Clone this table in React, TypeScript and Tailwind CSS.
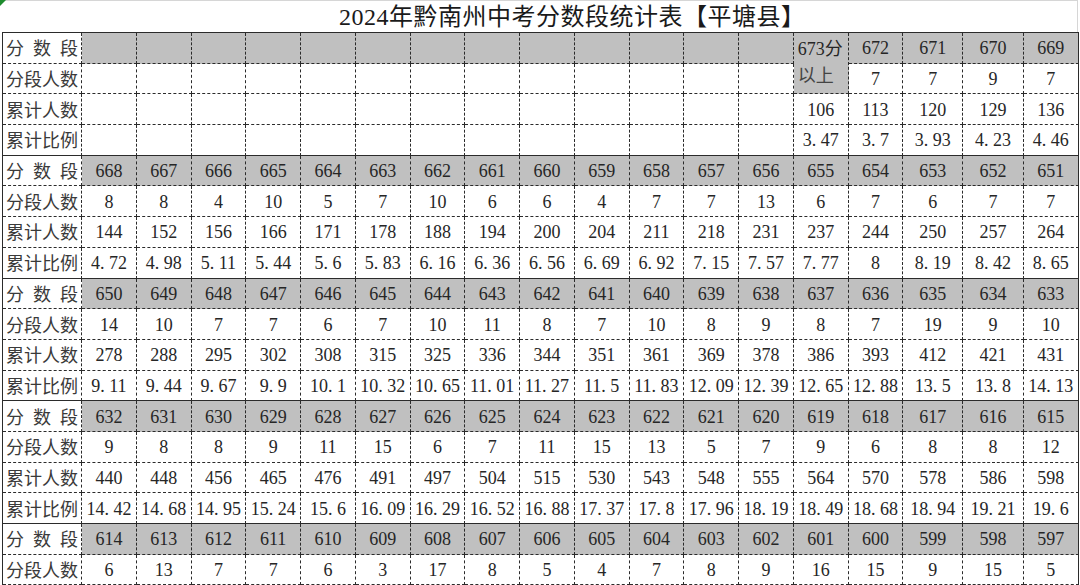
import React from 'react';

type Cell = string | null;

const LABELS = ['分数段', '分段人数', '累计人数', '累计比例'];

const span = (from: number, n: number) => Array.from({ length: n }, (_, i) => String(from - i));

const groups: Cell[][][] = [
  [
    [...Array(13).fill(''), '673分以上', '672', '671', '670', '669'],
    [...Array(13).fill(''), null, '7', '7', '9', '7'],
    [...Array(13).fill(''), '106', '113', '120', '129', '136'],
    [...Array(13).fill(''), '3.47', '3.7', '3.93', '4.23', '4.46'],
  ],
  [
    span(668, 18),
    '8 8 4 10 5 7 10 6 6 4 7 7 13 6 7 6 7 7'.split(' '),
    '144 152 156 166 171 178 188 194 200 204 211 218 231 237 244 250 257 264'.split(' '),
    '4.72 4.98 5.11 5.44 5.6 5.83 6.16 6.36 6.56 6.69 6.92 7.15 7.57 7.77 8 8.19 8.42 8.65'.split(' '),
  ],
  [
    span(650, 18),
    '14 10 7 7 6 7 10 11 8 7 10 8 9 8 7 19 9 10'.split(' '),
    '278 288 295 302 308 315 325 336 344 351 361 369 378 386 393 412 421 431'.split(' '),
    '9.11 9.44 9.67 9.9 10.1 10.32 10.65 11.01 11.27 11.5 11.83 12.09 12.39 12.65 12.88 13.5 13.8 14.13'.split(' '),
  ],
  [
    span(632, 18),
    '9 8 8 9 11 15 6 7 11 15 13 5 7 9 6 8 8 12'.split(' '),
    '440 448 456 465 476 491 497 504 515 530 543 548 555 564 570 578 586 598'.split(' '),
    '14.42 14.68 14.95 15.24 15.6 16.09 16.29 16.52 16.88 17.37 17.8 17.96 18.19 18.49 18.68 18.94 19.21 19.6'.split(' '),
  ],
  [
    span(614, 18),
    '6 13 7 7 6 3 17 8 5 4 7 8 9 16 15 9 15 5'.split(' '),
  ],
];

// SimSun-style period: dot sits in a half-width slot
function Num({ v }: { v: string }) {
  const [a, b] = v.split('.');
  if (b === undefined) return <>{a}</>;
  return (
    <>
      {a}
      <span className="inline-block w-[0.5em] text-left">.</span>
      {b}
    </>
  );
}

function Label({ text }: { text: string }) {
  return (
    <div className="flex w-full justify-between px-[3px] text-[18px] text-[#3a3a3a] font-['Noto_Sans_CJK_SC',sans-serif]">
      {text.split('').map((c, i) => (
        <span key={i}>{c}</span>
      ))}
    </div>
  );
}

export default function App() {
  const cells: React.ReactNode[] = [];

  groups.forEach((rows, g) => {
    rows.forEach((row, r) => {
      const groupEnd = r === 3;
      const bottom = groupEnd ? '[border-bottom-style:solid]' : '[border-bottom-style:dashed]';
      cells.push(
        <div
          key={`l-${g}-${r}`}
          className={`flex items-center border-r border-b border-[#2b2b2b] bg-white [border-right-style:dashed] ${bottom}`}
        >
          <Label text={LABELS[r]} />
        </div>
      );
      row.forEach((v, c) => {
        if (v === null) return;
        const right = c === 17 ? '[border-right-style:solid]' : '[border-right-style:dashed]';
        const fill = r === 0 ? 'bg-[#c0c0c0]' : 'bg-white';
        if (v === '673分以上') {
          cells.push(
            <div
              key={`c-${g}-${r}-${c}`}
              className={`row-span-2 flex flex-col justify-center border-r border-b border-[#2b2b2b] pl-[4px] leading-[27px] ${fill} ${right} [border-bottom-style:dashed]`}
            >
              <span>673分</span>
              <span className="text-[#444]">以上</span>
            </div>
          );
          return;
        }
        cells.push(
          <div
            key={`c-${g}-${r}-${c}`}
            className={`flex items-center justify-center whitespace-nowrap border-r border-b border-[#2b2b2b] pt-[2px] ${fill} ${right} ${bottom}`}
          >
            <Num v={v} />
          </div>
        );
      });
    });
  });

  return (
    <div className="relative h-[585px] w-[1080px] overflow-hidden bg-white text-[#262626] font-['Liberation_Serif','Noto_Sans_CJK_SC',serif]">
      <svg className="absolute left-0 top-0" width="6" height="6" viewBox="0 0 6 6">
        <path d="M0 0H6L0 6Z" fill="#1e8c2e" />
      </svg>
      <div className="flex h-[32px] w-[1078px] items-center border-t border-r border-[#d6d6d6] pl-[339px] pt-[1px] text-[24px] tracking-[0.5px] text-[#1a1a1a]">
        2024年黔南州中考分数段统计表【平塘县】
      </div>
      <div className="ml-[2px] grid w-[1077px] grid-cols-[79px_repeat(15,54.75px)_60px_60.3px_minmax(0,1fr)] grid-rows-[repeat(18,30.7px)] border-l border-t border-[#2b2b2b] text-[18px]">
        {cells}
      </div>
    </div>
  );
}
